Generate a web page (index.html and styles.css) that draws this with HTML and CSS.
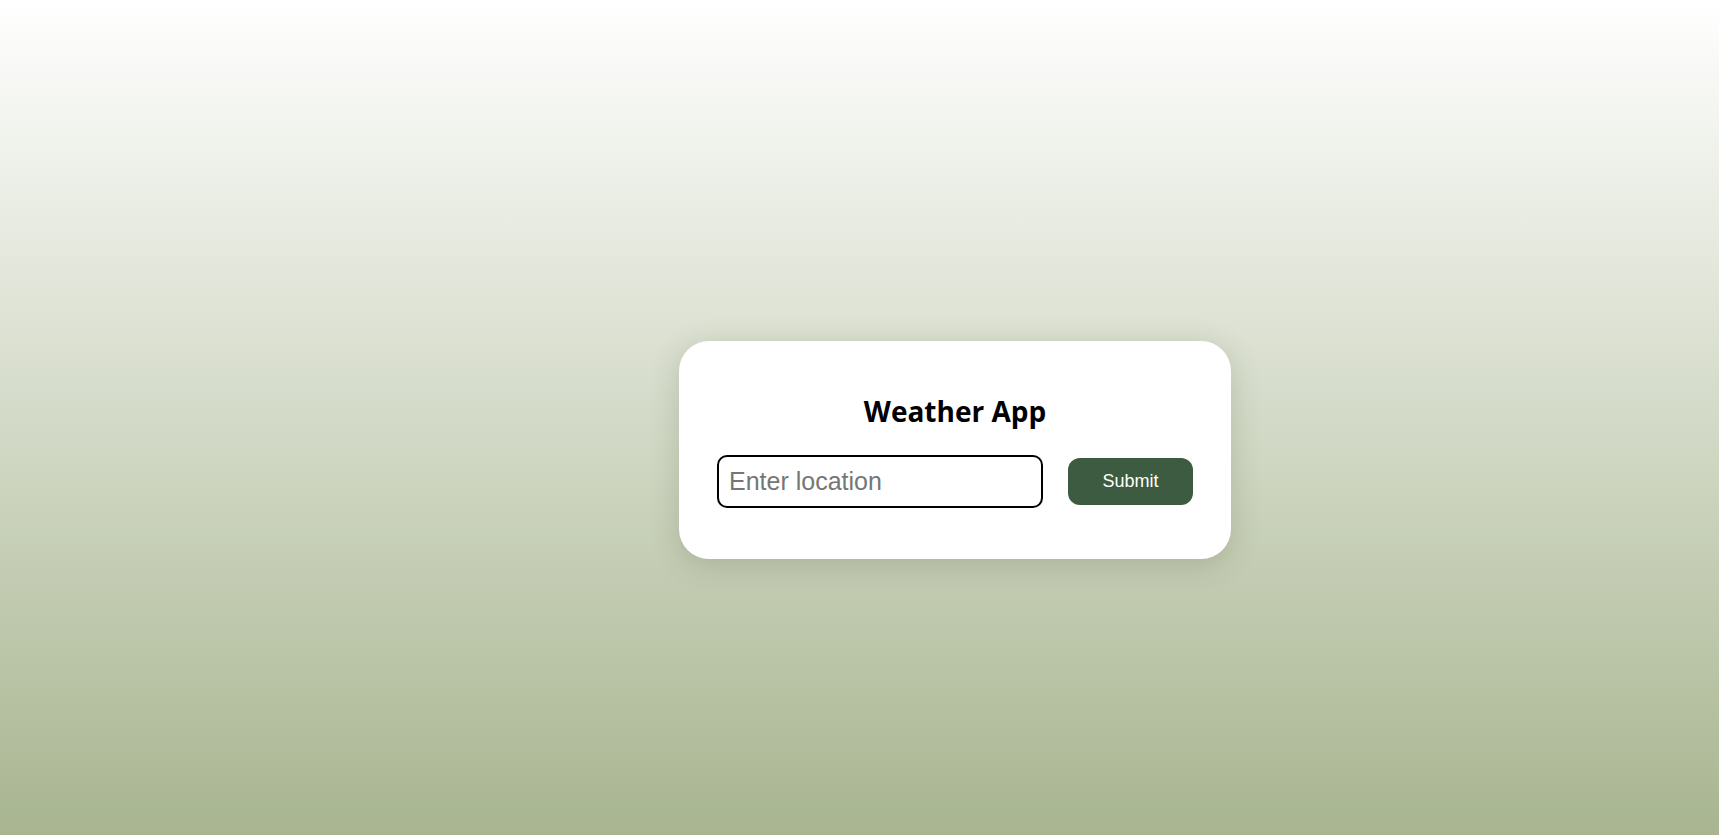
FILE: index.html
```html
<!DOCTYPE html>
<html lang="en">
<head>
<meta charset="utf-8">
<title>Weather App</title>
<link rel="stylesheet" href="styles.css">
</head>
<body>
<main class="page">
  <section class="card">
    <h1 class="title">Weather App</h1>
    <form class="search" onsubmit="return false;">
      <input class="location" type="text" placeholder="Enter location">
      <button class="submit" type="submit">Submit</button>
    </form>
  </section>
</main>
</body>
</html>
```
FILE: styles.css
```css
html, body {
  margin: 0;
  padding: 0;
}
body {
  min-height: 100vh;
  background: linear-gradient(to bottom, #ffffff 0%, #a8b590 100%);
  font-family: "Liberation Sans", Arial, sans-serif;
}
.page {
  box-sizing: border-box;
  height: 100vh;
  padding: 65px 0 0 191px;
  display: flex;
  justify-content: center;
  align-items: center;
}
.card {
  box-sizing: border-box;
  width: 552px;
  height: 218px;
  padding: 50px 38px 0;
  background: #ffffff;
  border-radius: 30px;
  box-shadow: 0 6px 30px rgba(60, 70, 40, 0.2);
  display: flex;
  flex-direction: column;
  align-items: stretch;
}
.title {
  margin: 0 0 24px;
  font-family: "Open Sans", "Noto Sans", sans-serif;
  font-weight: 700;
  font-size: 28px;
  line-height: 40px;
  text-align: center;
  color: #000;
}
.search {
  display: flex;
  align-items: center;
  gap: 25px;
  margin: 0;
}
.location {
  box-sizing: border-box;
  width: 326px;
  height: 53px;
  padding: 0 10px;
  border: 2px solid #000;
  border-radius: 10px;
  font-family: "Liberation Sans", Arial, sans-serif;
  font-size: 25px;
  color: #000;
  background: #fff;
  outline: none;
}
.location::placeholder {
  color: #767676;
}
.submit {
  box-sizing: border-box;
  width: 126px;
  height: 47px;
  border: none;
  border-radius: 12px;
  background: #3c5b40;
  color: #ffffff;
  font-family: "Liberation Sans", Arial, sans-serif;
  font-size: 18px;
  cursor: pointer;
}
```
